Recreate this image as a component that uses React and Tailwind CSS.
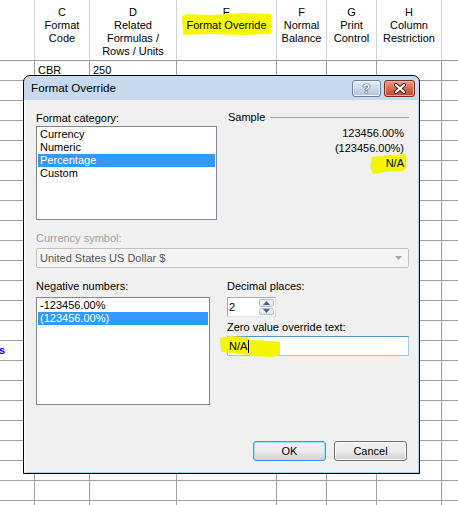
const COLS = "grid grid-cols-[35px_55px_87px_100px_50px_50px_65px_100px]";

function HeaderCell({ lines, highlight }) {
  return (
    <div className="relative flex flex-col items-center pt-[6px] leading-[13px] border-r border-[#d4d4d4]">
      {lines.map((l, i) => (
        <div key={i} className="relative whitespace-nowrap">
          {highlight && i === 1 && (
            <svg className="absolute left-[-5px] top-[-6px]" width="91" height="23" viewBox="0 0 91 23">
              <path d="M1 3 L6 1 L30 2 L62 0 L90 1 L90 21 L60 22 L30 21 L2 22 Z" fill="#f8f800" />
            </svg>
          )}
          <span className="relative">{l}</span>
        </div>
      ))}
    </div>
  );
}

function Row({ cells = [] }) {
  return (
    <div className={COLS}>
      {Array.from({ length: 8 }).map((_, i) => (
        <div
          key={i}
          className="h-[20px] border-r border-b border-[#a0a0a0] pl-[3px] leading-[19px] overflow-hidden whitespace-nowrap"
        >
          {cells[i]}
        </div>
      ))}
    </div>
  );
}

function ListItem({ children, selected }) {
  return (
    <div
      className={
        "h-[13px] leading-[13px] pl-[2px] whitespace-nowrap " +
        (selected ? "bg-[#3399ff] text-white" : "")
      }
    >
      {children}
    </div>
  );
}

function Button({ children, isDefault }) {
  return (
    <div
      className={
        "w-[73px] h-[20px] rounded-[3px] flex items-center justify-center border bg-gradient-to-b from-[#f2f2f2] via-[#ebebeb] to-[#cfcfcf] " +
        (isDefault
          ? "border-[#3c9ad8] shadow-[inset_0_0_0_1px_#9fe2fb]"
          : "border-[#707070] shadow-[inset_0_0_0_1px_#fbfbfb]")
      }
    >
      {children}
    </div>
  );
}

export default function App() {
  const rows = Array.from({ length: 23 });
  return (
    <div className="relative w-[458px] h-[505px] overflow-hidden bg-white text-[11px] text-black font-['Liberation_Sans',Arial,sans-serif]">
      {/* spreadsheet header */}
      <div className={COLS + " h-[61px] border-b border-[#9b9b9b]"}>
        <div className="border-r border-[#d4d4d4]" />
        <HeaderCell lines={["C", "Format", "Code"]} />
        <HeaderCell lines={["D", "Related", "Formulas /", "Rows / Units"]} />
        <HeaderCell lines={["E", "Format Override"]} highlight />
        <HeaderCell lines={["F", "Normal", "Balance"]} />
        <HeaderCell lines={["G", "Print", "Control"]} />
        <HeaderCell lines={["H", "Column", "Restriction"]} />
        <div />
      </div>
      {/* spreadsheet rows */}
      {rows.map((_, i) => (
        <Row
          key={i}
          cells={
            i === 0
              ? [null, "CBR", "250"]
              : i === 14
              ? [
                  <span key="s" className="ml-[-4px] font-bold text-[#0000ff]">
                    s
                  </span>,
                ]
              : []
          }
        />
      ))}

      {/* dialog window */}
      <div className="absolute left-[23px] top-[75px] w-[397px] h-[399px] border border-black rounded-t-[7px] overflow-hidden flex flex-col bg-gradient-to-b from-[#c8daef] to-[#aac4e4]">
        {/* title bar */}
        <div className="h-[24px] flex items-start shrink-0">
          <div className="pl-[7px] pt-[5px] text-[11.7px] leading-[14px]">Format Override</div>
          <div className="flex-1" />
          <div className="flex gap-[3px] pt-[4px] pr-[4px]">
            <div className="w-[29px] h-[17px] rounded-[3px] border border-[#6c7f9e] bg-gradient-to-b from-[#e4ecf7] via-[#c9d7ea] to-[#b2c5e0] flex items-center justify-center shadow-[inset_0_0_0_1px_#eef3fa]">
              <span className="text-white font-bold text-[13px] leading-[13px] [text-shadow:0_0_1px_#2b3b58,0_0_1px_#2b3b58,0_0_1px_#2b3b58]">
                ?
              </span>
            </div>
            <div className="w-[31px] h-[17px] rounded-[3px] border border-[#7a2c22] bg-gradient-to-b from-[#e8a08c] via-[#d66a52] to-[#c0442c] flex items-center justify-center shadow-[inset_0_0_0_1px_#eab3a5]">
              <svg width="14" height="11" viewBox="0 0 14 11">
                <path d="M3 2 L11 9 M11 2 L3 9" stroke="#4a1a12" strokeWidth="4" strokeLinecap="round" />
                <path d="M3 2 L11 9 M11 2 L3 9" stroke="#ffffff" strokeWidth="2.2" strokeLinecap="round" />
              </svg>
            </div>
          </div>
        </div>

        {/* client area */}
        <div className="flex-1 flex flex-col bg-[#f0f0f0] border-r border-b border-[#a6d4ef] border-l-[2px] border-l-[#f7f9fc] pl-[10px] pr-[9px] pt-[12px]">
          {/* top section */}
          <div className="grid grid-cols-[181px_1fr] gap-x-[11px]">
            <div>
              <div className="h-[13px] leading-[13px]">Format category:</div>
              <div className="mt-[1px] h-[94px] border border-[#828790] bg-white p-[1px]">
                <ListItem>Currency</ListItem>
                <ListItem>Numeric</ListItem>
                <ListItem selected>Percentage</ListItem>
                <ListItem>Custom</ListItem>
              </div>
            </div>
            <div className="-mt-[1px]">
              <div className="flex items-center h-[13px] leading-[13px]">
                <span>Sample</span>
                <div className="ml-[5px] flex-1 h-px bg-[#a0a0a0]" />
              </div>
              <div className="mt-[2px] flex flex-col items-end pr-[5px] leading-[15px]">
                <div>123456.00%</div>
                <div>(123456.00%)</div>
                <div className="relative">
                  <svg className="absolute left-[-16px] top-[-2px]" width="37" height="21" viewBox="0 0 37 21">
                    <path d="M2 3 L20 1 L36 0 L36 14 L33 17 L14 18 L3 20 L0 12 Z" fill="#f5f500" />
                  </svg>
                  <span className="relative">N/A</span>
                </div>
              </div>
            </div>
          </div>

          {/* currency symbol */}
          <div className="mt-[12px] h-[13px] leading-[13px] text-[#a0a0a0]">Currency symbol:</div>
          <div className="mt-[3px] h-[20px] rounded-[2px] border border-[#c3c3c3] bg-[#f4f4f4] flex items-center pl-[3px] pr-[6px] text-[#555555]">
            <span className="flex-1">United States US Dollar $</span>
            <svg width="7" height="4" viewBox="0 0 7 4">
              <path d="M0 0 L7 0 L3.5 4 Z" fill="#a5a5a5" />
            </svg>
          </div>

          {/* bottom section */}
          <div className="mt-[12px] grid grid-cols-[174px_1fr] gap-x-[17px]">
            <div>
              <div className="h-[13px] leading-[13px]">Negative numbers:</div>
              <div className="mt-[4px] h-[108px] border border-[#828790] bg-white p-[1px]">
                <ListItem>-123456.00%</ListItem>
                <ListItem selected>(123456.00%)</ListItem>
              </div>
            </div>
            <div>
              <div className="h-[13px] leading-[13px]">Decimal places:</div>
              <div className="mt-[4px] w-[49px] h-[20px] border border-[#abadb3] border-r-[#dbdfe6] border-b-[#e3e9ef] bg-white flex">
                <div className="flex-1 pl-[1px] leading-[18px]">2</div>
                <div className="w-[16px] flex flex-col gap-[1px] py-[1px] pr-[1px]">
                  <div className="flex-1 rounded-[2px] border border-[#b6c2d4] bg-gradient-to-b from-[#f4f7fb] to-[#d9e3f0] flex items-center justify-center">
                    <svg width="7" height="4" viewBox="0 0 7 4">
                      <path d="M0 4 L7 4 L3.5 0 Z" fill="#4d6185" />
                    </svg>
                  </div>
                  <div className="flex-1 rounded-[2px] border border-[#b6c2d4] bg-gradient-to-b from-[#f4f7fb] to-[#d9e3f0] flex items-center justify-center">
                    <svg width="7" height="4" viewBox="0 0 7 4">
                      <path d="M0 0 L7 0 L3.5 4 Z" fill="#4d6185" />
                    </svg>
                  </div>
                </div>
              </div>
              <div className="mt-[4px] h-[13px] leading-[13px]">Zero value override text:</div>
              <div className="relative mt-[2px] h-[20px] border border-[#a4c9e3] border-t-[#5e95c9] bg-white flex items-center pl-[1px]">
                <svg className="absolute left-[-8px] top-[-1px]" width="61" height="22" viewBox="0 0 61 22">
                  <path d="M0 2 L10 0 L28 1 L30 4 L52 5 L60 6 L60 19 L52 21 L32 20 L28 19 L10 17 L1 16 Z" fill="#f5f500" />
                </svg>
                <span className="relative">N/A</span>
                <span className="relative ml-[1px] w-px h-[13px] bg-black" />
              </div>
            </div>
          </div>

          {/* buttons */}
          <div className="mt-[36px] flex justify-end gap-[8px] pr-[2px]">
            <Button isDefault>OK</Button>
            <Button>Cancel</Button>
          </div>
        </div>
      </div>
    </div>
  );
}
